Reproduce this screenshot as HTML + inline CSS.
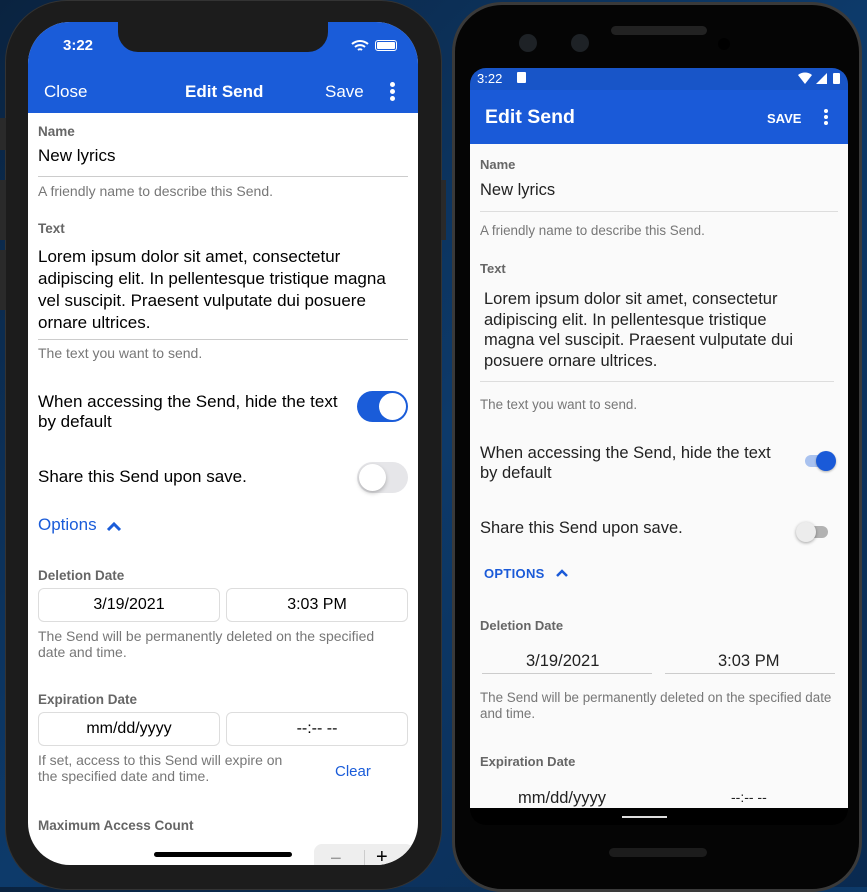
<!DOCTYPE html>
<html><head><meta charset="utf-8"><style>
*{margin:0;padding:0;box-sizing:border-box}
body{width:867px;height:887px;overflow:hidden;position:relative;font-family:"Liberation Sans",sans-serif;background:linear-gradient(135deg,#0a2340 0%,#0d3a6a 50%,#0a2a50 100%)}
.a{position:absolute;white-space:nowrap}
.ios{color:#000;font-size:17px}
.lbl{font-size:13.5px;color:#666;font-weight:bold}
.hint{font-size:14px;color:#777}
.ibox{position:absolute;height:34px;border:1px solid #ddd;border-radius:6px;background:#fff;font-size:16px;text-align:center;line-height:32px}
.al{font-size:13px;color:#666;font-weight:bold}
.ah{font-size:13.4px;color:#777}
.ab{font-size:16.5px;color:#222}
</style></head><body>
<!-- iPhone -->
<div class="a" style="left:5px;top:0;width:437px;height:890px;background:#1c1c1c;border-radius:62px;border:1px solid #333"></div>
<div class="a" style="left:0;top:118px;width:6px;height:32px;background:#2a2a2a"></div>
<div class="a" style="left:0;top:180px;width:6px;height:60px;background:#2a2a2a"></div>
<div class="a" style="left:0;top:250px;width:6px;height:60px;background:#2a2a2a"></div>
<div class="a" style="left:441px;top:180px;width:5px;height:60px;background:#2a2a2a"></div>
<div class="a" style="left:28px;top:22px;width:390px;height:843px;background:#fff;border-radius:42px;overflow:hidden">
  <div class="a" style="left:0;top:0;width:390px;height:91px;background:#1a5cd9"></div>
  <div class="a" style="left:90px;top:-2px;width:210px;height:32px;background:#1c1c1c;border-radius:0 0 20px 20px"></div>
  <div class="a" style="left:35px;top:15px;color:#fff;font-weight:bold;font-size:15px">3:22</div>
  <svg class="a" style="left:323px;top:17px" width="18" height="13" viewBox="0 0 18 13"><path d="M1 5a12 12 0 0 1 16 0M4 8a7.5 7.5 0 0 1 10 0M7 11a3 3 0 0 1 4 0" stroke="#fff" stroke-width="2" fill="none"/></svg>
  <div class="a" style="left:347px;top:18px;width:22px;height:11px;border:1.5px solid #fff;border-radius:3px;padding:1px"><div style="width:100%;height:100%;background:#fff;border-radius:1px"></div></div>
  <div class="a" style="left:16px;top:60px;color:#fff;font-size:17px">Close</div>
  <div class="a" style="left:157px;top:60px;color:#fff;font-size:17px;font-weight:bold">Edit Send</div>
  <div class="a" style="left:297px;top:60px;color:#fff;font-size:17px">Save</div>
  <div class="a" style="left:362px;top:60px;width:4px">
    <div style="width:5px;height:5px;border-radius:50%;background:#fff;margin-bottom:2px"></div><div style="width:5px;height:5px;border-radius:50%;background:#fff;margin-bottom:2px"></div><div style="width:5px;height:5px;border-radius:50%;background:#fff"></div></div>
  <div class="a lbl" style="left:10px;top:102px">Name</div>
  <div class="a ios" style="left:10px;top:124px">New lyrics</div>
  <div class="a" style="left:10px;top:154px;width:370px;height:1px;background:#ccc"></div>
  <div class="a hint" style="left:10px;top:161px">A friendly name to describe this Send.</div>
  <div class="a lbl" style="left:10px;top:199px">Text</div>
  <div class="a ios" style="left:10px;top:224px;line-height:22px">Lorem ipsum dolor sit amet, consectetur<br>adipiscing elit. In pellentesque tristique magna<br>vel suscipit. Praesent vulputate dui posuere<br>ornare ultrices.</div>
  <div class="a" style="left:10px;top:317px;width:370px;height:1px;background:#ccc"></div>
  <div class="a hint" style="left:10px;top:323px">The text you want to send.</div>
  <div class="a ios" style="left:10px;top:370px;line-height:20px">When accessing the Send, hide the text<br>by default</div>
  <div class="a" style="left:329px;top:369px;width:51px;height:31px;border-radius:16px;background:#1a5cd9"><div style="position:absolute;right:2px;top:2px;width:27px;height:27px;border-radius:50%;background:#fff"></div></div>
  <div class="a ios" style="left:10px;top:445px">Share this Send upon save.</div>
  <div class="a" style="left:329px;top:440px;width:51px;height:31px;border-radius:16px;background:#e6e6e9"><div style="position:absolute;left:2px;top:2px;width:27px;height:27px;border-radius:50%;background:#fff;box-shadow:0 2px 4px rgba(0,0,0,.25)"></div></div>
  <div class="a" style="left:10px;top:493px;color:#1a5cd9;font-size:17px">Options</div>
  <svg class="a" style="left:78px;top:499px" width="16" height="11" viewBox="0 0 16 11"><path d="M2 9l6-6 6 6" stroke="#1a5cd9" stroke-width="3" fill="none"/></svg>
  <div class="a lbl" style="left:10px;top:546px">Deletion Date</div>
  <div class="ibox" style="left:10px;top:566px;width:182px">3/19/2021</div>
  <div class="ibox" style="left:198px;top:566px;width:182px">3:03 PM</div>
  <div class="a hint" style="left:10px;top:606px;line-height:16px">The Send will be permanently deleted on the specified<br>date and time.</div>
  <div class="a lbl" style="left:10px;top:670px">Expiration Date</div>
  <div class="ibox" style="left:10px;top:690px;width:182px">mm/dd/yyyy</div>
  <div class="ibox" style="left:198px;top:690px;width:182px">--:-- --</div>
  <div class="a hint" style="left:10px;top:730px;line-height:16px">If set, access to this Send will expire on<br>the specified date and time.</div>
  <div class="a" style="left:307px;top:741px;color:#1a5cd9;font-size:15px">Clear</div>
  <div class="a lbl" style="left:10px;top:796px">Maximum Access Count</div>
  <div class="a" style="left:286px;top:822px;width:100px;height:40px;background:#eee;border-radius:8px"></div>
  <div class="a" style="left:302px;top:826px;color:#999;font-size:20px">−</div>
  <div class="a" style="left:336px;top:828px;width:1px;height:18px;background:#ccc"></div>
  <div class="a" style="left:348px;top:824px;color:#000;font-size:20px">+</div>
  <div class="a" style="left:126px;top:830px;width:138px;height:5px;border-radius:3px;background:#000"></div>
</div>
<!-- Android -->
<div class="a" style="left:452px;top:2px;width:410px;height:890px;background:#050505;border-radius:50px;border:3px solid #3a3a3a"></div>
<div class="a" style="left:611px;top:26px;width:96px;height:9px;border-radius:5px;background:#222"></div>
<div class="a" style="left:519px;top:34px;width:18px;height:18px;border-radius:50%;background:#1e2226"></div>
<div class="a" style="left:571px;top:34px;width:18px;height:18px;border-radius:50%;background:#1e2226"></div>
<div class="a" style="left:718px;top:38px;width:12px;height:12px;border-radius:50%;background:#000"></div>
<div class="a" style="left:609px;top:848px;width:98px;height:9px;border-radius:5px;background:#1c1c1c"></div>
<div class="a" style="left:470px;top:68px;width:378px;height:757px;background:#000;border-radius:16px 16px 16px 16px;overflow:hidden">
  <div class="a" style="left:0;top:0;width:378px;height:22px;background:#1855c8"></div>
  <div class="a" style="left:7px;top:3px;color:#fff;font-size:13px">3:22</div>
  <div class="a" style="left:47px;top:4px;width:9px;height:11px;background:#fff;border-radius:1px"></div>
  <svg class="a" style="left:327px;top:4px" width="44" height="13" viewBox="0 0 44 13"><path d="M1 3a11 11 0 0 1 14 0L8 12z" fill="#fff"/><path d="M30 1v11H19z" fill="#fff"/><rect x="36" y="1" width="7" height="11" rx="1" fill="#fff"/></svg>
  <div class="a" style="left:0;top:22px;width:378px;height:54px;background:#1a5ad8"></div>
  <div class="a" style="left:15px;top:38px;color:#fff;font-size:19.5px;font-weight:bold">Edit Send</div>
  <div class="a" style="left:297px;top:43px;color:#fff;font-size:13px;font-weight:bold">SAVE</div>
  <div class="a" style="left:354px;top:41px"><div style="width:4px;height:4px;border-radius:50%;background:#fff;margin-bottom:2px"></div><div style="width:4px;height:4px;border-radius:50%;background:#fff;margin-bottom:2px"></div><div style="width:4px;height:4px;border-radius:50%;background:#fff"></div></div>
  <div class="a" style="left:0;top:76px;width:378px;height:664px;background:#fafafa">
    <div class="a al" style="left:10px;top:13px">Name</div>
    <div class="a ab" style="left:10px;top:37px">New lyrics</div>
    <div class="a" style="left:10px;top:67px;width:358px;height:1px;background:#ddd"></div>
    <div class="a ah" style="left:10px;top:79px">A friendly name to describe this Send.</div>
    <div class="a al" style="left:10px;top:117px">Text</div>
    <div class="a ab" style="left:14px;top:145px;line-height:20.5px">Lorem ipsum dolor sit amet, consectetur<br>adipiscing elit. In pellentesque tristique<br>magna vel suscipit. Praesent vulputate dui<br>posuere ornare ultrices.</div>
    <div class="a" style="left:10px;top:237px;width:354px;height:1px;background:#ddd"></div>
    <div class="a ah" style="left:10px;top:253px">The text you want to send.</div>
    <div class="a ab" style="left:10px;top:299px;line-height:20px">When accessing the Send, hide the text<br>by default</div>
    <div class="a" style="left:335px;top:311px;width:30px;height:12px;border-radius:6px;background:#a9c2ef"></div>
    <div class="a" style="left:346px;top:307px;width:20px;height:20px;border-radius:50%;background:#1a5ad8;box-shadow:0 1px 2px rgba(0,0,0,.3)"></div>
    <div class="a ab" style="left:10px;top:375px">Share this Send upon save.</div>
    <div class="a" style="left:328px;top:382px;width:30px;height:12px;border-radius:6px;background:#b2b2b2"></div>
    <div class="a" style="left:326px;top:378px;width:20px;height:20px;border-radius:50%;background:#ececec;box-shadow:0 1px 3px rgba(0,0,0,.35)"></div>
    <div class="a" style="left:14px;top:422px;color:#1a5ad8;font-size:13px;font-weight:bold;letter-spacing:.3px">OPTIONS</div>
    <svg class="a" style="left:85px;top:424px" width="14" height="9" viewBox="0 0 14 9"><path d="M2 8l5-5 5 5" stroke="#1a5ad8" stroke-width="2.5" fill="none"/></svg>
    <div class="a al" style="left:10px;top:474px">Deletion Date</div>
    <div class="a ab" style="left:56px;top:508px">3/19/2021</div>
    <div class="a" style="left:12px;top:529px;width:170px;height:1px;background:#ccc"></div>
    <div class="a ab" style="left:248px;top:508px">3:03 PM</div>
    <div class="a" style="left:195px;top:529px;width:170px;height:1px;background:#ccc"></div>
    <div class="a ah" style="left:10px;top:546px;line-height:16px">The Send will be permanently deleted on the specified date<br>and time.</div>
    <div class="a al" style="left:10px;top:610px">Expiration Date</div>
    <div class="a ab" style="left:48px;top:645px">mm/dd/yyyy</div>
    <div class="a ab" style="left:261px;top:645px;font-size:14px">--:-- --</div>
  </div>
  <div class="a" style="left:152px;top:748px;width:45px;height:2px;background:#ddd"></div>
</div>
</body></html>
